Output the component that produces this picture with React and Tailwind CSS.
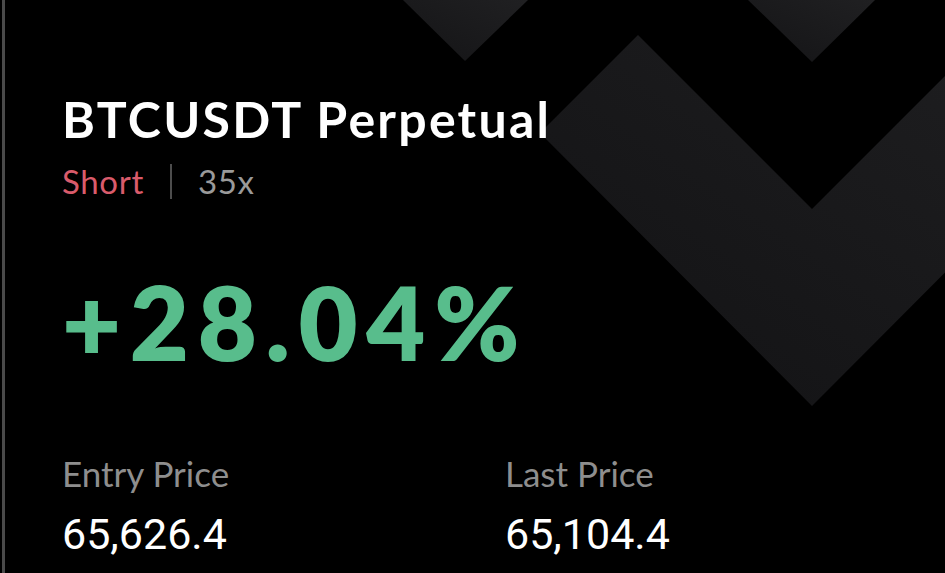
import React from 'react';

const stats = [
  { label: 'Entry Price', value: '65,626.4' },
  { label: 'Last Price', value: '65,104.4' },
];

// Chevron pattern behind the card content
function Backdrop() {
  return (
    <svg className="absolute inset-0 pointer-events-none" width="945" height="573" viewBox="0 0 945 573">
      <defs>
        <linearGradient id="chev" x1="0" y1="1" x2="1" y2="0">
          <stop offset="0" stopColor="#121214" />
          <stop offset="1" stopColor="#1f1f21" />
        </linearGradient>
        <linearGradient id="tri" x1="0" y1="1" x2="1" y2="0">
          <stop offset="0" stopColor="#141416" />
          <stop offset="1" stopColor="#202022" />
        </linearGradient>
      </defs>
      <polygon points="398,0 523,0 460,61" fill="url(#tri)" />
      <polygon points="743,0 870,0 807,62" fill="url(#tri)" />
      <polygon points="633,35 807,209 981,35 1079,133 807,406 535,133" fill="url(#chev)" />
    </svg>
  );
}

export default function App() {
  return (
    <div className="w-[945px] h-[573px] bg-black overflow-hidden pl-[2px]">
      <div className="relative h-full border-l-[3px] border-[#4a4a4a]">
        <Backdrop />
        <div className="relative flex flex-col pl-[57px] pt-[94px]" style={{ fontFamily: 'Lato, "Open Sans", sans-serif' }}>
          <h1 className="text-[50px] leading-none font-bold text-white tracking-[0.045em]">BTCUSDT Perpetual</h1>

          <div className="flex items-center mt-[20px] text-[33px] leading-none">
            <span className="text-[#d95b6b] tracking-[0.02em]">Short</span>
            <span className="w-[2px] h-[35px] bg-[#4d4d4d] mx-[26px]" />
            <span className="text-[#9a9a9a] tracking-[0.02em]">35x</span>
          </div>

          <div className="mt-[72px] text-[102px] leading-none font-extrabold text-[#58bd8c] tracking-[0.085em]">+28.04%</div>

          <div className="grid grid-cols-[443px_1fr] mt-[83px]">
            {stats.map((s) => (
              <div key={s.label} className="flex flex-col">
                <span className="text-[35px] leading-none text-[#8e8e8e]">{s.label}</span>
                <span
                  className="mt-[22px] text-[43px] leading-none font-normal text-white"
                  style={{ fontFamily: 'Roboto, sans-serif' }}
                >
                  {s.value}
                </span>
              </div>
            ))}
          </div>
        </div>
      </div>
    </div>
  );
}
